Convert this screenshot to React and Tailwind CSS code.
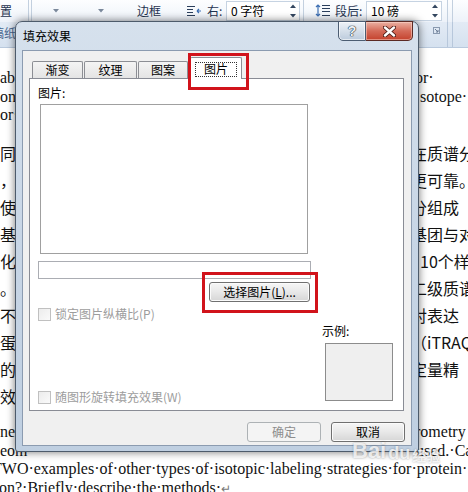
import React from "react";

const cjk = "font-['Noto_Sans_CJK_SC',sans-serif]";

const block1 = [
  { l: "able·", r: "or·", p: "pl-[4px]" },
  { l: "on·in", r: "sotope·", p: "pl-[9px]" },
  { l: "or·co", r: "", p: "" },
];

const block2 = [
  { l: "同", r: "在质谱分析", p: "" },
  { l: "，", r: "更可靠。", p: "" },
  { l: "使", r: "分组成", p: "" },
  { l: "基", r: "基团与对", p: "" },
  { l: "化", r: "10个样品", p: "pl-[9px]" },
  { l: "。", r: "二级质谱", p: "" },
  { l: "不", r: "对表达", p: "" },
  { l: "蛋", r: "（iTRAQ", p: "" },
  { l: "的", r: "定量精", p: "" },
  { l: "效", r: "", p: "" },
];

function Line({ l, r, p, h }) {
  return (
    <div className={`flex whitespace-nowrap ${h}`}>
      <div className="w-[411px] shrink-0 overflow-hidden">{l}</div>
      <div className={`${p} overflow-hidden`}>{r}</div>
    </div>
  );
}

function Arrow() {
  return (
    <svg width="6" height="4" viewBox="0 0 6 4">
      <path d="M0 0 L6 0 L3 3.5 Z" fill="#7a889b" />
    </svg>
  );
}

function Spinner() {
  return (
    <svg width="6" height="14" viewBox="0 0 6 14">
      <path d="M0 4 L6 4 L3 0.5 Z" fill="#33465f" />
      <path d="M0 10 L6 10 L3 13.5 Z" fill="#33465f" />
    </svg>
  );
}

function IndentIcon() {
  return (
    <svg width="15" height="13" viewBox="0 0 15 13">
      <path d="M0 1.5 H8 M0 4.5 H6 M0 7.5 H6 M0 10.5 H8" stroke="#2b3f5c" strokeWidth="1.2" />
      <path d="M14 6 L10 6 M10 6 L12 4 M10 6 L12 8" stroke="#3d6fb3" strokeWidth="1.2" fill="none" />
    </svg>
  );
}

function SpacingIcon() {
  return (
    <svg width="15" height="14" viewBox="0 0 15 14">
      <path d="M7 1.5 H15 M7 4.5 H15 M7 7.5 H15 M7 11.5 H15" stroke="#2b3f5c" strokeWidth="1.2" />
      <path d="M3 1 V12 M1 3 L3 1 L5 3 M1 10 L3 12 L5 10" stroke="#3d6fb3" strokeWidth="1.2" fill="none" />
    </svg>
  );
}

function Ribbon() {
  return (
    <div className={`h-[48px] flex flex-col ${cjk} text-[12px] text-[#1f3350]`}>
      <div className="h-[22px] flex items-stretch bg-linear-to-b from-[#fdfeff] to-[#edf2f9]">
        <div className="w-[26px] shrink-0 flex items-center leading-none">置</div>
        <div className="w-[7px] shrink-0 flex pl-[2px]">
          <div className="w-px bg-[#c3d0df]" />
          <div className="w-px ml-[2px] bg-[#c3d0df]" />
        </div>
        <div className="w-[45px] shrink-0 flex items-center justify-center">
          <Arrow />
        </div>
        <div className="w-[46px] shrink-0 flex items-center justify-center">
          <Arrow />
        </div>
        <div className="w-[50px] shrink-0 flex items-center justify-center leading-none">边框</div>
        <div className="w-[10px] shrink-0" />
        <div className="w-[20px] shrink-0 flex items-center pl-[3px]">
          <IndentIcon />
        </div>
        <div className="w-[22px] shrink-0 flex items-center pl-[3px] leading-none">右:</div>
        <div className="w-[74px] shrink-0 my-[1px] border border-[#c6d3e2] bg-white flex items-center justify-between pl-[4px] pr-[3px] leading-none text-[12px] text-black">
          <span>0 字符</span>
          <Spinner />
        </div>
        <div className="w-[6px] shrink-0 flex pl-[3px]">
          <div className="w-px bg-[#c3d0df]" />
        </div>
        <div className="w-[28px] shrink-0 flex items-center pl-[9px]">
          <SpacingIcon />
        </div>
        <div className="w-[32px] shrink-0 flex items-center pl-[1px] leading-none">段后:</div>
        <div className="w-[76px] shrink-0 my-[1px] border border-[#c6d3e2] bg-white flex items-center justify-between pl-[4px] pr-[3px] leading-none text-[12px] text-black">
          <span>10 磅</span>
          <Spinner />
        </div>
        <div className="w-[5px] shrink-0" />
        <div className="w-px shrink-0 bg-[#c3d0df]" />
        <div className="w-[4px] shrink-0" />
        <div className="w-px shrink-0 bg-[#c3d0df]" />
        <div className="flex-1" />
      </div>
      <div className="h-[26px] flex items-stretch bg-linear-to-b from-[#e3ebf5] to-[#d5e1ef] border-b border-[#b9c9dd]">
        <div className="w-[441px] shrink-0 ml-[-8px] pt-[5px] leading-none text-[#4a6890]">稿纸</div>
        <div className="w-[7px] shrink-0 pt-[5px]">
          <svg width="7" height="7" viewBox="0 0 7 7">
            <rect x="0.5" y="0.5" width="6" height="6" fill="none" stroke="#8a9ab0" />
            <path d="M2 2 L5 5 M5 3 V5 H3" stroke="#6b7d95" strokeWidth="1" fill="none" />
          </svg>
        </div>
        <div className="w-[7px] shrink-0" />
        <div className="w-px shrink-0 bg-[#b7c7db]" />
        <div className="w-[4px] shrink-0" />
        <div className="w-px shrink-0 bg-[#b7c7db]" />
        <div className="flex-1" />
      </div>
    </div>
  );
}

function Doc() {
  return (
    <div className="font-['Liberation_Serif',serif] text-[16px] text-[#111]">
      <div className="pt-[21px] leading-[18.5px]">
        {block1.map((x, i) => (
          <Line key={i} {...x} h="h-[18.5px]" />
        ))}
      </div>
      <div className={`mt-[15px] ${cjk} leading-[27.1px]`}>
        {block2.map((x, i) => (
          <Line key={i} {...x} h="h-[27.1px]" />
        ))}
      </div>
      <div className="mt-[13px] leading-[18.5px]">
        <Line l="ner" r="rometry" p="pl-[4px]" h="h-[18.5px]" />
        <Line l="eom" r="used.·Ca" p="pl-[5px]" h="h-[18.5px]" />
        <div className="h-[18.5px] whitespace-nowrap ml-[-8px]">
          TWO·examples·of·other·types·of·isotopic·labeling·strategies·for·protein·
        </div>
        <div className="h-[18.5px] whitespace-nowrap ml-[-1px]">
          on?·Briefly·describe·the·methods·<span className="text-[#777] text-[12px]">↵</span>
        </div>
      </div>
    </div>
  );
}

function CaptionButtons() {
  return (
    <div className="absolute top-[-1px] right-[5px] flex">
      <div className="w-[28px] h-[20px] border border-[#4c5d72] rounded-bl-[5px] bg-linear-to-b from-[#edf2f7] via-[#d5dfea] to-[#bccbdc] flex items-center justify-center shadow-[inset_0_0_0_1px_rgba(255,255,255,0.6)]">
        <span className="text-[14px] font-bold text-[#eef2f6] leading-none font-['Liberation_Sans',sans-serif] [text-shadow:0_0_1px_#1f2c3b,0_0_1px_#1f2c3b,0_0_1px_#1f2c3b]">
          ?
        </span>
      </div>
      <div className="w-[47px] h-[20px] border border-l-0 border-[#5b2a24] rounded-br-[5px] bg-linear-to-b from-[#eab0a2] via-[#d46a58] to-[#c4412c] flex items-center justify-center shadow-[inset_0_0_0_1px_rgba(255,220,210,0.5)]">
        <svg width="13" height="11" viewBox="0 0 13 11">
          <path d="M2 1.5 L11 9.5 M11 1.5 L2 9.5" stroke="#4a1c16" strokeWidth="4.2" strokeLinecap="round" />
          <path d="M2 1.5 L11 9.5 M11 1.5 L2 9.5" stroke="#ffffff" strokeWidth="2.4" strokeLinecap="round" />
        </svg>
      </div>
    </div>
  );
}

function Tab({ label, w }) {
  return (
    <div
      className={`${w} h-[17px] border border-b-0 border-[#8c8e94] rounded-t-[2px] bg-linear-to-b from-[#f4f4f4] to-[#e4e4e4] flex items-center justify-center text-[12px] leading-none text-black`}
    >
      {label}
    </div>
  );
}

function CheckBox({ label, cls }) {
  return (
    <div className={`flex items-center h-[14px] ${cls}`}>
      <div className="w-[13px] h-[13px] border border-[#c0c0c0] bg-linear-to-br from-[#ececec] to-[#fafafa]" />
      <span className="ml-[4px] text-[12px] text-[#9d9d9d] leading-none">{label}</span>
    </div>
  );
}

function Dialog() {
  return (
    <div
      className={`absolute left-[15px] top-[21px] w-[404px] h-[431px] rounded-t-[7px] rounded-b-[3px] border border-[#4d5b6b] bg-linear-to-b from-[#d6e1ed] via-[#c8d6e6] to-[#bfcfe1] shadow-[0_0_9px_rgba(0,0,0,0.55)] flex flex-col px-[6px] pb-[5px] ${cjk}`}
    >
      <div className="h-[28px] flex items-center pl-[1px] text-[12px] text-black leading-none shrink-0">
        填充效果
      </div>
      <CaptionButtons />
      <div className="h-[396px] bg-[#f0f0f0] border border-[#8b9bb0] flex flex-col pl-[6px] pr-[7px] pt-[6px]">
        <div className="h-[21px] flex items-end pl-[3px] shrink-0">
          <Tab label="渐变" w="w-[51px]" />
          <div className="w-px" />
          <Tab label="纹理" w="w-[53px]" />
          <div className="w-px" />
          <Tab label="图案" w="w-[50px]" />
          <div className="w-[2px]" />
          <div className="relative z-10 w-[52px] h-[22px] mb-[-1px] border border-b-0 border-[#8c8e94] rounded-t-[2px] bg-white flex items-center justify-center text-[12px] leading-none text-black">
            <div className="absolute left-[4px] right-[4px] top-[4px] bottom-[2px] border border-dotted border-[#333]" />
            图片
            <div className="absolute left-[-3px] right-[-8px] top-[-5px] bottom-[-11px] border-[3px] border-[#d1131b]" />
          </div>
        </div>
        <div className="h-[333px] shrink-0 bg-white border border-[#898c95] flex flex-col">
          <div className="pt-[6px] pl-[8px] text-[12px] leading-[16px] text-black h-[22px]">图片:</div>
          <div className="mt-[3px] ml-[10px] w-[268px] h-[150px] border border-[#a0a0a0] bg-white" />
          <div className="mt-[7px] ml-[8px] w-[273px] h-[18px] border border-[#abadb3] bg-white" />
          <div className="mt-[3px] ml-[8px] w-[272px] flex justify-end">
            <div className="relative w-[101px] h-[20px] border border-[#707070] rounded-[3px] bg-linear-to-b from-[#f6f6f6] via-[#e8e8e8] to-[#d6d6d6] shadow-[inset_0_0_0_1px_#fbfbfb] flex items-center justify-center text-[12px] leading-none text-black">
              选择图片(<span className="underline">L</span>)...
              <div className="absolute left-[-8px] right-[-9px] top-[-11px] bottom-[-12px] border-[3px] border-[#d1131b]" />
            </div>
          </div>
          <div className="flex-1 flex pl-[8px] pr-[10px] pb-[6px]">
            <div className="flex flex-col">
              <CheckBox label="锁定图片纵横比(P)" cls="mt-[5px]" />
              <CheckBox label="随图形旋转填充效果(W)" cls="mt-auto" />
            </div>
            <div className="ml-auto self-end mb-[3px] w-[71px] flex flex-col items-start">
              <div className="text-[12px] leading-[16px] text-black">示例:</div>
              <div className="mt-[4px] ml-[3px] w-[68px] h-[58px] border border-[#8c8c8c] bg-[#efefef]" />
            </div>
          </div>
        </div>
        <div className="mt-[11px] flex justify-end gap-[10px] mr-[-1px]">
          <div className="w-[74px] h-[20px] border border-[#adb2b5] rounded-[3px] bg-[#f4f4f4] flex items-center justify-center text-[12px] leading-none text-[#8d8d8d]">
            确定
          </div>
          <div className="w-[74px] h-[20px] border border-[#707070] rounded-[3px] bg-linear-to-b from-[#f6f6f6] via-[#e8e8e8] to-[#d6d6d6] shadow-[inset_0_0_0_1px_#fbfbfb] flex items-center justify-center text-[12px] leading-none text-black">
            取消
          </div>
        </div>
      </div>
    </div>
  );
}

export default function App() {
  return (
    <div className="relative w-[468px] h-[492px] overflow-hidden bg-white">
      <Ribbon />
      <Doc />
      <Dialog />
      <div className="absolute left-[352px] top-[440px] flex items-end text-white/80 font-bold font-['Liberation_Sans',sans-serif] [text-shadow:0_0_2px_rgba(0,0,0,0.35)]">
        <span className="text-[22px] leading-none">Bai</span>
        <span className="text-[18px] leading-none ml-[2px]">du</span>
        <span className={`text-[14px] leading-none ml-[2px] ${cjk}`}>经验</span>
      </div>
    </div>
  );
}
